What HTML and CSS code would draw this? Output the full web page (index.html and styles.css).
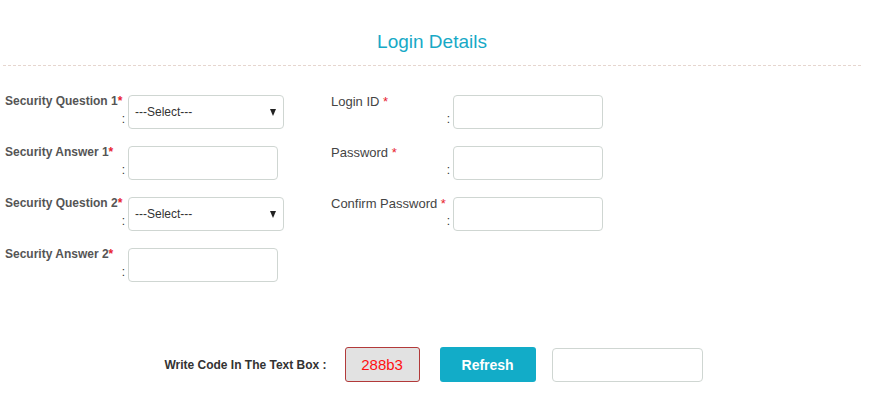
FILE: index.html
```html
<!DOCTYPE html>
<html lang="en">
<head>
    <meta charset="UTF-8">
    <title>Login Details</title>
    <link rel="stylesheet" href="styles.css">
</head>
<body>
    <div class="panel">
        <h2 class="panel-title">Login Details</h2>

        <div class="form-cols">
            <div class="form-col left-col">
                <div class="form-row">
                    <div class="form-label strong">
                        <span>Security Question 1<span class="req">*</span></span>
                        <span class="colon">:</span>
                    </div>
                    <div class="select-box">
                        <span>---Select---</span>
                        <span class="caret"></span>
                    </div>
                </div>
                <div class="form-row">
                    <div class="form-label strong">
                        <span>Security Answer 1<span class="req">*</span></span>
                        <span class="colon">:</span>
                    </div>
                    <input type="text" class="form-input">
                </div>
                <div class="form-row">
                    <div class="form-label strong">
                        <span>Security Question 2<span class="req">*</span></span>
                        <span class="colon">:</span>
                    </div>
                    <div class="select-box">
                        <span>---Select---</span>
                        <span class="caret"></span>
                    </div>
                </div>
                <div class="form-row">
                    <div class="form-label strong">
                        <span>Security Answer 2<span class="req">*</span></span>
                        <span class="colon">:</span>
                    </div>
                    <input type="text" class="form-input">
                </div>
            </div>

            <div class="form-col right-col">
                <div class="form-row">
                    <div class="form-label">
                        <span>Login ID <span class="req">*</span></span>
                        <span class="colon">:</span>
                    </div>
                    <input type="text" class="form-input">
                </div>
                <div class="form-row">
                    <div class="form-label">
                        <span>Password <span class="req">*</span></span>
                        <span class="colon">:</span>
                    </div>
                    <input type="password" class="form-input">
                </div>
                <div class="form-row">
                    <div class="form-label">
                        <span>Confirm Password <span class="req">*</span></span>
                        <span class="colon">:</span>
                    </div>
                    <input type="password" class="form-input">
                </div>
            </div>
        </div>

        <div class="captcha-row">
            <span class="captcha-label">Write Code In The Text Box :</span>
            <div class="captcha-code">288b3</div>
            <button type="button" class="refresh-btn">Refresh</button>
            <input type="text" class="form-input captcha-input">
        </div>
    </div>
</body>
</html>
```

FILE: styles.css
```css
* {
    margin: 0;
    padding: 0;
    box-sizing: border-box;
}

body {
    font-family: 'Liberation Sans', Arial, sans-serif;
    background: #ffffff;
    color: #555555;
}

.panel {
    width: 858px;
    margin-left: 3px;
    padding-top: 30px;
}

.panel-title {
    text-align: center;
    font-size: 19px;
    font-weight: normal;
    color: #17a9c6;
    line-height: 24px;
    padding-bottom: 11px;
    border-bottom: 1px dashed #e6d6cf;
}

.form-cols {
    display: flex;
    padding-top: 29px;
}

.form-col {
    display: flex;
    flex-direction: column;
    gap: 17px;
}

.left-col {
    width: 328px;
    padding-left: 2px;
}

.form-row {
    display: flex;
    height: 34px;
}

.form-label {
    width: 123px;
    display: flex;
    flex-direction: column;
    justify-content: space-between;
    font-size: 12px;
    line-height: 13px;
    padding-bottom: 3px;
    color: #555555;
}

.form-label.strong {
    font-weight: bold;
}

.right-col .form-label {
    width: 122px;
    font-size: 13px;
    color: #444444;
}

.req {
    color: #e8232f;
}

.colon {
    align-self: flex-end;
    margin-right: 3px;
    font-weight: normal;
    color: #333333;
    font-size: 12px;
}

.form-input {
    width: 150px;
    height: 34px;
    border: 1px solid #cfd6d2;
    border-radius: 4px;
    background: #ffffff;
    font-family: inherit;
    font-size: 12px;
    padding: 0 8px;
    outline: none;
}

.select-box {
    width: 156px;
    height: 34px;
    border: 1px solid #cfd6d2;
    border-radius: 4px;
    display: flex;
    align-items: center;
    justify-content: space-between;
    padding: 0 6px 0 6px;
    font-size: 12px;
    color: #333333;
}

.caret {
    width: 0;
    height: 0;
    border-left: 3.5px solid transparent;
    border-right: 3.5px solid transparent;
    border-top: 7px solid #222222;
    margin-right: 1px;
}

.captcha-row {
    display: flex;
    align-items: center;
    justify-content: center;
    margin-top: 65px;
    padding-left: 3px;
}

.captcha-label {
    font-size: 12px;
    font-weight: bold;
    color: #333333;
    margin-right: 18px;
}

.captcha-code {
    width: 75px;
    height: 35px;
    border: 1px solid #b23a3a;
    border-radius: 3px;
    background: #e2e2e2;
    color: #ff1111;
    font-size: 15px;
    display: flex;
    align-items: center;
    justify-content: center;
    margin-right: 20px;
}

.refresh-btn {
    width: 96px;
    height: 35px;
    border: none;
    border-radius: 3px;
    background: #12acc8;
    color: #ffffff;
    font-family: inherit;
    font-size: 14px;
    font-weight: bold;
    margin-right: 16px;
}

.captcha-input {
    width: 151px;
}
```
